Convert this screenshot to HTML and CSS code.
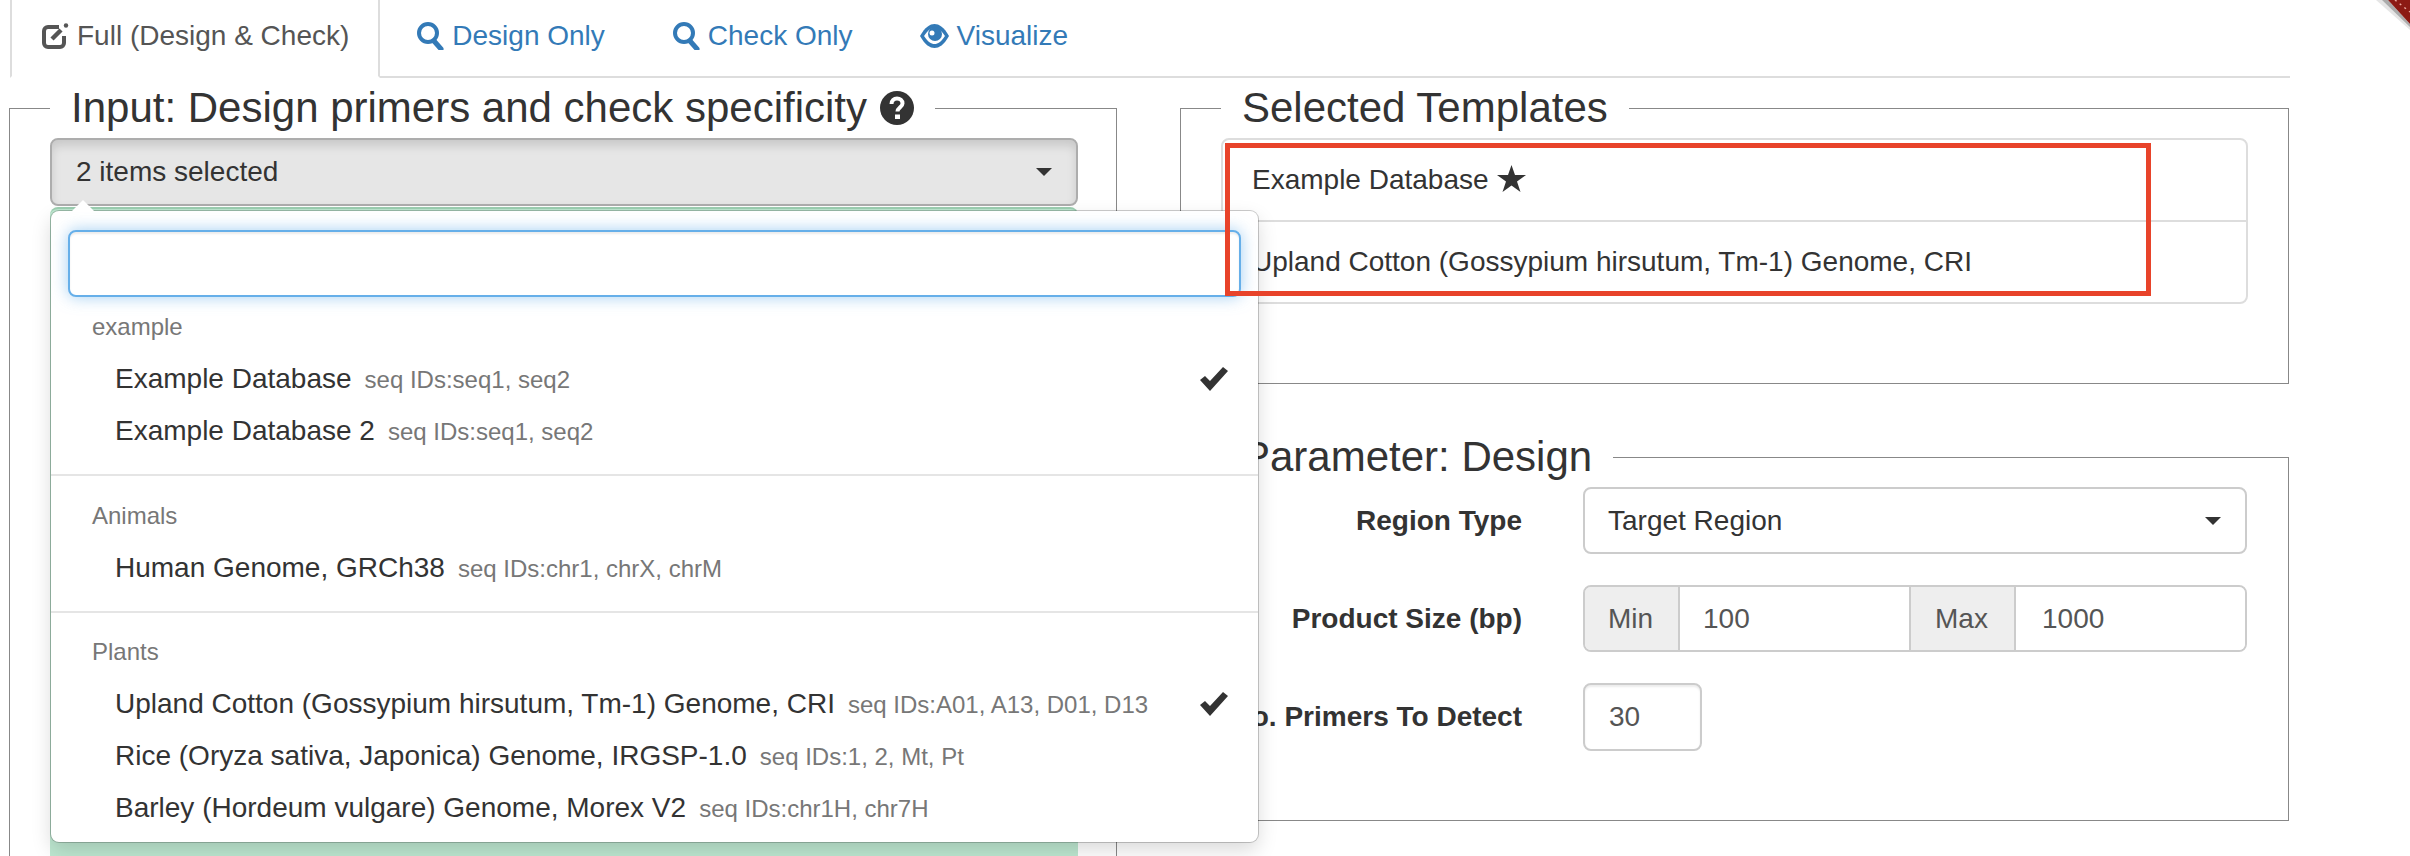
FILE: index.html
```html
<!DOCTYPE html>
<html lang="en">
<head>
    <meta charset="UTF-8">
    <title>Primer design</title>
    <link rel="stylesheet" href="styles.css">
</head>
<body>
    <div class="page">
        <!-- Tabs -->
        <ul class="tabs">
            <li class="tab active">
                <a href="#">
                    <svg class="tab-icon" width="28" height="28" viewBox="0 0 28 28" fill="none" stroke="currentColor">
                        <path d="M18 5H7a4 4 0 0 0-4 4v12a4 4 0 0 0 4 4h12a4 4 0 0 0 4-4v-7" stroke-width="4"/>
                        <path d="M11 17 20 8" stroke-width="4.5"/>
                        <circle cx="25" cy="3.5" r="2.2" fill="currentColor" stroke="none"/>
                    </svg>
                    Full (Design &amp; Check)
                </a>
            </li>
            <li class="tab">
                <a href="#">
                    <svg class="tab-icon" width="28" height="28" viewBox="0 0 28 28" fill="none" stroke="currentColor">
                        <circle cx="12" cy="11" r="9" stroke-width="4"/>
                        <path d="M18 19 25 27" stroke-width="5" stroke-linecap="round"/>
                    </svg>
                    Design Only
                </a>
            </li>
            <li class="tab">
                <a href="#">
                    <svg class="tab-icon" width="28" height="28" viewBox="0 0 28 28" fill="none" stroke="currentColor">
                        <circle cx="12" cy="11" r="9" stroke-width="4"/>
                        <path d="M18 19 25 27" stroke-width="5" stroke-linecap="round"/>
                    </svg>
                    Check Only
                </a>
            </li>
            <li class="tab">
                <a href="#">
                    <svg class="tab-icon" width="29" height="24" viewBox="0 0 29 24">
                        <path fill="currentColor" d="M0 12C5 3 10 0 14.500 0S24 3 29 12C24 21 19 24 14.500 24S5 21 0 12Z"/>
                        <path fill="#fff" d="M4 12C8 6 11 4 14.500 4S21 6 25 12C21 18 18 20 14.500 20S8 18 4 12Z"/>
                        <circle cx="15" cy="10" r="7" fill="currentColor"/>
                        <circle cx="12" cy="9" r="2.500" fill="#fff"/>
                    </svg>
                    Visualize
                </a>
            </li>
        </ul>

        <div class="panels">
            <!-- Left column -->
            <fieldset class="box input-box">
                <legend>
                    Input: Design primers and check specificity
                    <svg class="help-icon" width="34" height="34" viewBox="0 0 34 34">
                        <circle cx="17" cy="17" r="17" fill="#333"/>
                        <path d="M11.500 13c0-3.500 2.500-5.500 5.500-5.500s5.500 2 5.500 5c0 3.500-5 4-5 8" fill="none" stroke="#fff" stroke-width="4"/>
                        <rect x="15" y="23.500" width="5" height="4.500" fill="#fff"/>
                    </svg>
                </legend>
                <div class="picker">
                    <button class="picker-btn" type="button">2 items selected<span class="caret"></span></button>
                    <div class="green-area"></div>

                    <div class="picker-menu">
                        <input class="picker-search" type="text">
                        <ul class="options">
                            <li class="group-name">example</li>
                            <li class="option">Example Database <small>seq IDs:seq1, seq2</small>
                                <svg class="tick" width="28" height="24" viewBox="0 0 28 24"><polygon points="0,13 5,9 10,14 23,0 28,4 10,24"/></svg>
                            </li>
                            <li class="option">Example Database 2 <small>seq IDs:seq1, seq2</small></li>
                            <li class="divider"></li>
                            <li class="group-name">Animals</li>
                            <li class="option">Human Genome, GRCh38 <small>seq IDs:chr1, chrX, chrM</small></li>
                            <li class="divider"></li>
                            <li class="group-name">Plants</li>
                            <li class="option">Upland Cotton (Gossypium hirsutum, Tm-1) Genome, CRI <small>seq IDs:A01, A13, D01, D13</small>
                                <svg class="tick" width="28" height="24" viewBox="0 0 28 24"><polygon points="0,13 5,9 10,14 23,0 28,4 10,24"/></svg>
                            </li>
                            <li class="option">Rice (Oryza sativa, Japonica) Genome, IRGSP-1.0 <small>seq IDs:1, 2, Mt, Pt</small></li>
                            <li class="option">Barley (Hordeum vulgare) Genome, Morex V2 <small>seq IDs:chr1H, chr7H</small></li>
                        </ul>
                    </div>
                </div>
            </fieldset>

            <!-- Right column -->
            <div class="right-col">
                <fieldset class="box templates">
                    <legend>Selected Templates</legend>
                    <ul class="template-list">
                        <li>Example Database
                            <svg class="star" width="29" height="27" viewBox="0 0 29 27"><polygon points="14.500,0 18,10 29,10 20,16.500 23.500,27 14.500,20.500 5.500,27 9,16.500 0,10 11,10"/></svg>
                        </li>
                        <li>Upland Cotton (Gossypium hirsutum, Tm-1) Genome, CRI</li>
                    </ul>
                </fieldset>

                <fieldset class="box params">
                    <legend>Parameter: Design</legend>
                    <div class="param-grid">
                        <label>Region Type</label>
                        <div class="select-box">Target Region<span class="caret"></span></div>

                        <label>Product Size (bp)</label>
                        <div class="input-group">
                            <span class="addon addon-min">Min</span>
                            <input class="group-input input-min" type="text" value="100">
                            <span class="addon addon-max">Max</span>
                            <input class="group-input input-max" type="text" value="1000">
                        </div>

                        <label>No. Primers To Detect</label>
                        <input class="small-input" type="text" value="30">
                    </div>
                </fieldset>
            </div>
        </div>

        <!-- Annotation drawn on top of the screenshot -->
        <div class="red-mark"></div>

        <svg class="ribbon" width="34" height="30" viewBox="0 0 34 30">
            <polygon points="0,0 34,30 34,24 12,0" fill="#000" opacity=".1"/>
            <polygon points="6,0 34,27 34,24 12,0" fill="#000" opacity=".25"/>
            <polygon points="12,0 34,24 34,0" fill="#8c1a14"/>
            <line x1="19" y1="0" x2="34" y2="12" stroke="#e8a8a0" stroke-width="1.500" stroke-dasharray="2 4"/>
        </svg>
    </div>
</body>
</html>
```

FILE: styles.css
```css
html, body {
    margin: 0;
    height: 856px;
    overflow: hidden;
    background: #fff;
}

body {
    font-family: "Liberation Sans", Arial, sans-serif;
    font-size: 28px;
    color: #333;
}

ul {
    list-style: none;
    margin: 0;
    padding: 0;
}

.page {
    position: relative;
    height: 856px;
    padding-left: 9px;
    box-sizing: border-box;
    overflow: hidden;
}

/* Tabs */
.tabs {
    display: flex;
    gap: 5px;
    width: 2280px;
    height: 78px;
    margin-left: 1px;
    border-bottom: 2px solid #ddd;
    box-sizing: border-box;
}

.tab {
    height: 78px;
    border-left: 2px solid transparent;
    border-right: 2px solid transparent;
    border-bottom: 2px solid transparent;
    box-sizing: border-box;
}

.tab a {
    display: flex;
    align-items: center;
    gap: 8px;
    height: 72px;
    padding: 0 29px;
    color: #337ab7;
    text-decoration: none;
    white-space: nowrap;
}

.tab.active {
    border-color: #ddd;
    border-bottom-color: #fff;
}

.tab.active a {
    color: #555;
}

/* Fieldsets */
.panels {
    display: grid;
    grid-template-columns: 1108px 1109px;
    column-gap: 63px;
    align-items: start;
}

.box {
    margin: 0;
    padding: 0 40px;
    min-width: 0;
    border: 1px solid #888;
}

.box legend {
    display: flex;
    align-items: center;
    gap: 13px;
    margin-left: 0;
    padding: 0 21px;
    font-size: 42px;
    line-height: 60px;
    white-space: nowrap;
}

.input-box {
    padding-right: 38px;
    border-bottom: 0;
}

/* Left picker */
.picker {
    position: relative;
}

.picker-btn {
    display: flex;
    align-items: center;
    justify-content: space-between;
    width: 100%;
    height: 68px;
    padding: 0 24px;
    font: inherit;
    color: #333;
    background: #e6e6e6;
    border: 2px solid #adadad;
    border-radius: 8px;
    box-shadow: inset 0 6px 10px rgba(0, 0, 0, .125);
}

.caret {
    width: 0;
    height: 0;
    border-top: 8px solid #333;
    border-left: 8px solid transparent;
    border-right: 8px solid transparent;
}

.green-area {
    height: 649px;
    margin-top: 1px;
    box-sizing: border-box;
    background: #bde7d0;
    border-top: 2px solid #9ccfb1;
    border-radius: 8px 8px 0 0;
}

.picker-menu {
    position: absolute;
    top: 73px;
    left: 1px;
    z-index: 5;
    width: 1207px;
    height: 631px;
    padding: 19px 17px 0;
    box-sizing: border-box;
    background: #fff;
    border-radius: 8px;
    box-shadow: 0 0 0 1px rgba(0, 0, 0, .2), 0 8px 20px rgba(0, 0, 0, .15);
}

.picker-menu::before {
    content: "";
    position: absolute;
    top: -11px;
    left: 20px;
    border-bottom: 12px solid #fff;
    border-left: 12px solid transparent;
    border-right: 12px solid transparent;
}

.picker-search {
    display: block;
    width: 100%;
    height: 67px;
    box-sizing: border-box;
    background: #fff;
    border: 2px solid #66afe9;
    border-radius: 8px;
    outline: none;
    box-shadow: inset 0 2px 2px rgba(0, 0, 0, .075), 0 0 16px rgba(102, 175, 233, .6);
}

.options {
    margin: 4px -17px 0;
}

.group-name {
    height: 52px;
    padding-left: 41px;
    line-height: 52px;
    font-size: 24px;
    color: #777;
}

.option {
    display: flex;
    align-items: baseline;
    gap: 13px;
    height: 52px;
    padding: 0 30px 0 64px;
    line-height: 52px;
    white-space: nowrap;
}

.option small {
    font-size: 24px;
    color: #777;
}

.tick {
    align-self: center;
    margin-left: auto;
    fill: #333;
}

.divider {
    height: 2px;
    margin: 17px 0 13.5px;
    background: #e5e5e5;
}

/* Right column */
.templates {
    padding-bottom: 79px;
}

.params {
    margin-top: 43px;
    padding-bottom: 69px;
}

.template-list {
    border: 2px solid #ddd;
    border-radius: 8px;
}

.template-list li {
    display: flex;
    align-items: center;
    gap: 8px;
    height: 80px;
    padding-left: 29px;
    white-space: nowrap;
}

.template-list li + li {
    border-top: 2px solid #ddd;
}

.star {
    fill: #333;
    margin-bottom: 4px;
}

.param-grid {
    display: grid;
    grid-template-columns: 301px 664px;
    column-gap: 61px;
    row-gap: 31px;
    align-items: center;
}

.param-grid label {
    display: flex;
    justify-content: flex-end;
    font-weight: bold;
    white-space: nowrap;
}

.select-box {
    display: flex;
    align-items: center;
    justify-content: space-between;
    height: 67px;
    padding: 0 24px 0 23px;
    box-sizing: border-box;
    border: 2px solid #ccc;
    border-radius: 8px;
}

.input-group {
    display: flex;
    height: 67px;
    box-sizing: border-box;
    border: 2px solid #ccc;
    border-radius: 8px;
    overflow: hidden;
    box-shadow: inset 0 2px 2px rgba(0, 0, 0, .075);
}

.addon {
    display: flex;
    align-items: center;
    justify-content: center;
    padding-right: 2px;
    box-sizing: border-box;
    color: #555;
    background: #eee;
    border-right: 2px solid #ccc;
}

.addon-min {
    width: 95px;
}

.addon-max {
    width: 107px;
    border-left: 2px solid #ccc;
}

.group-input, .small-input {
    box-sizing: border-box;
    font: inherit;
    color: #555;
    background: #fff;
    outline: none;
}

.group-input {
    flex: 1;
    width: 0;
    padding: 0 0 0 23px;
    border: 0;
}

.input-min {
    flex: 0 0 229px;
}

.input-max {
    padding-left: 26px;
}

.small-input {
    width: 119px;
    height: 68px;
    padding: 0 24px;
    border: 2px solid #ccc;
    border-radius: 8px;
    box-shadow: inset 0 2px 2px rgba(0, 0, 0, .075);
}

/* Red annotation and corner ribbon */
.red-mark {
    position: absolute;
    top: 143px;
    left: 1225px;
    z-index: 10;
    width: 926px;
    height: 153px;
    box-sizing: border-box;
    border: 5px solid #e8432a;
}

.ribbon {
    position: absolute;
    top: 0;
    right: 0;
}
```
